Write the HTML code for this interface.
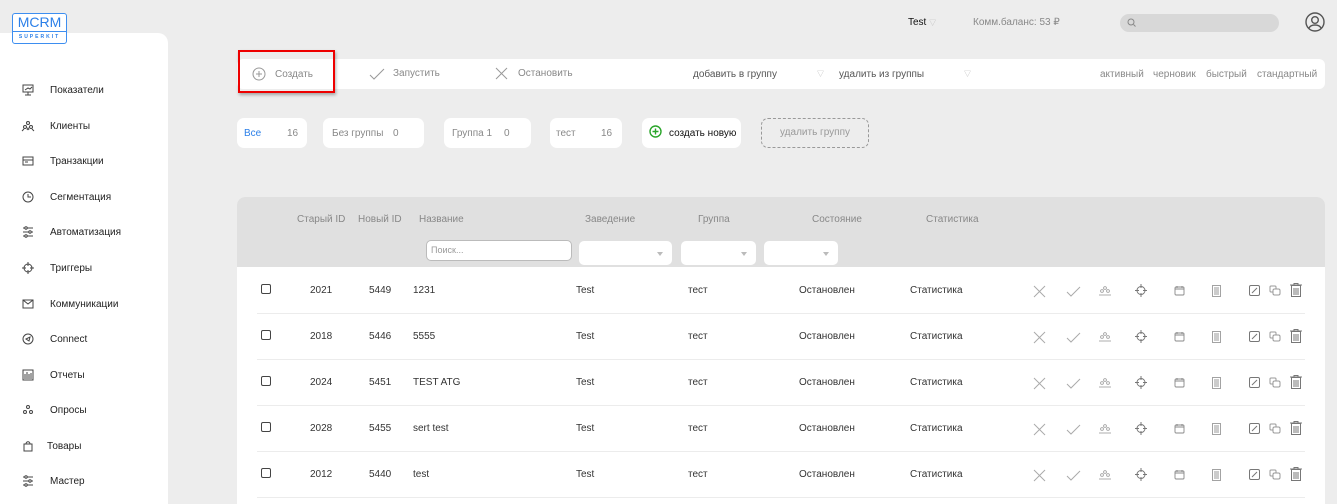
<!DOCTYPE html>
<html><head><meta charset="utf-8"><style>
*{box-sizing:border-box;margin:0;padding:0}
html,body{width:1337px;height:504px;overflow:hidden}
body{background:#ededed;font-family:"Liberation Sans","Noto Sans CJK SC",sans-serif;font-size:10px;color:#333;position:relative}
.a{position:absolute;white-space:nowrap}
.side{position:absolute;left:0;top:33px;width:168px;height:471px;background:#fff;border-top-right-radius:10px}
.nav{position:absolute;left:22px;font-size:10px;color:#222}
.nav svg{position:absolute;left:0;top:-1px}
.nav span{position:absolute;left:28px;top:0}
.logo{position:absolute;z-index:5;left:12px;top:13px;width:55px;height:31px;border:1.5px solid #3d8ef0;border-radius:3px;color:#2b7fe8;text-align:center;background:#fff;overflow:hidden}
.bar{position:absolute;left:237px;top:59px;width:1088px;height:30px;background:#fff;border-radius:6px}
.g{color:#888}
.chip{position:absolute;top:118px;height:30px;background:#fff;border-radius:7px}
.card{position:absolute;left:237px;top:197px;width:1088px;height:320px;background:#fff;border-radius:8px;overflow:hidden}
.head{position:absolute;left:0;top:0;width:1088px;height:70px;background:#e0e0e0}
.sel{position:absolute;top:44px;height:24px;background:#fff;border-radius:5px}
.sel:after{content:"";position:absolute;right:9px;top:11px;border:3px solid transparent;border-top:4px solid #bbb}
.ln{position:absolute;left:20px;width:1048px;height:1px;background:#ececec}
.cb{position:absolute;left:24px;width:10px;height:10px;border:1.3px solid #444;border-radius:2px}
svg{overflow:visible}
</style></head><body>
<div class="side">
<div class="nav" style="top:52px"><svg width="12" height="12" fill="none" stroke="#444"><rect x="1" y="1" width="10" height="7"/><path d="M6 8v3M3 11h6M3 6l3-2 2 1 2-2"/></svg><span>Показатели</span></div>
<div class="nav" style="top:88px"><svg width="12" height="12" fill="none" stroke="#444"><circle cx="6" cy="3" r="1.5"/><circle cx="3" cy="7" r="1.5"/><circle cx="9" cy="7" r="1.5"/><path d="M0 11l2-2M12 11l-2-2M5 10l1-2 1 2"/></svg><span>Клиенты</span></div>
<div class="nav" style="top:123px"><svg width="12" height="12" fill="none" stroke="#444"><rect x="1" y="2" width="10" height="8"/><path d="M1 5h10M3 7h3"/></svg><span>Транзакции</span></div>
<div class="nav" style="top:159px"><svg width="12" height="12" fill="none" stroke="#444"><circle cx="6" cy="6" r="5"/><path d="M6 3v3h3"/></svg><span>Сегментация</span></div>
<div class="nav" style="top:194px"><svg width="12" height="12" fill="none" stroke="#444"><path d="M1 2h10M1 6h10M1 10h10"/><circle cx="4" cy="2" r="1.2" fill="#fff"/><circle cx="8" cy="6" r="1.2" fill="#fff"/><circle cx="4" cy="10" r="1.2" fill="#fff"/></svg><span>Автоматизация</span></div>
<div class="nav" style="top:230px"><svg width="12" height="12" fill="none" stroke="#444"><circle cx="6" cy="6" r="4"/><path d="M6 0v4M6 8v4M0 6h4M8 6h4"/></svg><span>Триггеры</span></div>
<div class="nav" style="top:266px"><svg width="12" height="12" fill="none" stroke="#444"><rect x="1" y="2" width="10" height="8"/><path d="M1 2l5 4 5-4"/></svg><span>Коммуникации</span></div>
<div class="nav" style="top:301px"><svg width="12" height="12" fill="none" stroke="#444"><circle cx="6" cy="6" r="5"/><path d="M4 6l4-2-1 4z"/></svg><span>Connect</span></div>
<div class="nav" style="top:337px"><svg width="12" height="12" fill="none" stroke="#444"><rect x="1" y="1" width="10" height="10"/><path d="M3 8V5M5 8V3M7 8V5M9 8V4M2 9h8"/></svg><span>Отчеты</span></div>
<div class="nav" style="top:372px"><svg width="12" height="12" fill="none" stroke="#444"><circle cx="6" cy="3" r="1.5"/><circle cx="3" cy="8" r="1.5"/><circle cx="9" cy="8" r="1.5"/></svg><span>Опросы</span></div>
<div class="nav" style="top:408px"><svg width="12" height="12" fill="none" stroke="#444"><path d="M2 4h8v7H2zM4 4c0-3 4-3 4 0"/></svg><span style="left:25px">Товары</span></div>
<div class="nav" style="top:443px"><svg width="12" height="12" fill="none" stroke="#444"><path d="M1 2h10M1 6h10M1 10h10"/><circle cx="4" cy="2" r="1.2" fill="#fff"/><circle cx="8" cy="6" r="1.2" fill="#fff"/><circle cx="4" cy="10" r="1.2" fill="#fff"/></svg><span>Мастер</span></div>
</div>
<div class="logo"><div style="font-size:14px;line-height:17px">MCRM</div><div style="border-top:1px solid #3d8ef0;font-size:5px;letter-spacing:2px;line-height:10px;font-weight:bold">SUPERKIT</div></div>

<div class="a" style="left:908px;top:17px;color:#111">Test <span style="color:#bbb;font-size:7px">▽</span></div>
<div class="a g" style="left:973px;top:17px">Комм.баланс: 53 ₽</div>
<div class="a" style="left:1120px;top:14px;width:159px;height:18px;background:#d8d8d8;border-radius:9px"><svg width="10" height="10" style="position:absolute;left:7px;top:4px" fill="none" stroke="#888"><circle cx="4" cy="4" r="3"/><path d="M6.5 6.5l2 2"/></svg></div>
<svg class="a" style="left:1305px;top:12px" width="20" height="20" fill="none" stroke="#555" stroke-width="1.4"><circle cx="10" cy="10" r="9"/><circle cx="10" cy="8" r="3.3"/><path d="M4 16c2-4 10-4 12 0"/></svg>

<div class="bar">
<svg class="a" style="left:15px;top:8px" width="14" height="14" fill="none" stroke="#999"><circle cx="7" cy="7" r="6"/><path d="M7 4v6M4 7h6"/></svg>
<div class="a g" style="left:38px;top:10px">Создать</div>
<svg class="a" style="left:132px;top:9px" width="16" height="12" fill="none" stroke="#999"><path d="M1 7l4 4 10-10"/></svg>
<div class="a g" style="left:156px;top:9px">Запустить</div>
<svg class="a" style="left:258px;top:8px" width="13" height="13" fill="none" stroke="#999"><path d="M1 1l11 11M12 1L1 12"/></svg>
<div class="a g" style="left:281px;top:9px">Остановить</div>
<div class="a" style="left:456px;top:10px;color:#555">добавить в группу</div>
<div class="a" style="left:580px;top:10px;color:#bbb;font-size:7px">▽</div>
<div class="a" style="left:602px;top:10px;color:#555">удалить из группы</div>
<div class="a" style="left:727px;top:10px;color:#bbb;font-size:7px">▽</div>
<div class="a g" style="left:863px;top:10px">активный</div>
<div class="a g" style="left:916px;top:10px">черновик</div>
<div class="a g" style="left:969px;top:10px">быстрый</div>
<div class="a g" style="left:1020px;top:10px">стандартный</div>
</div>
<div class="a" style="left:238px;top:50px;width:97px;height:43px;border:2px solid #e00;box-shadow:1px 2px 3px rgba(0,0,0,.3)"></div>

<div class="chip" style="left:237px;width:70px"><span class="a" style="left:7px;top:10px;color:#2b7fe8">Все</span><span class="a g" style="left:50px;top:10px">16</span></div>
<div class="chip" style="left:323px;width:101px"><span class="a g" style="left:9px;top:10px">Без группы</span><span class="a g" style="left:70px;top:10px">0</span></div>
<div class="chip" style="left:444px;width:87px"><span class="a g" style="left:8px;top:10px">Группа 1</span><span class="a g" style="left:60px;top:10px">0</span></div>
<div class="chip" style="left:550px;width:72px"><span class="a g" style="left:6px;top:10px">тест</span><span class="a g" style="left:51px;top:10px">16</span></div>
<div class="chip" style="left:642px;width:99px"><svg class="a" style="left:7px;top:7px" width="13" height="13" fill="none" stroke="#2aa52a" stroke-width="1.4"><circle cx="6.5" cy="6.5" r="5.5"/><path d="M6.5 3.5v6M3.5 6.5h6"/></svg><span class="a" style="left:27px;top:10px;color:#111">создать новую</span></div>
<div class="a" style="left:761px;top:118px;width:108px;height:30px;border:1px dashed #999;border-radius:7px;color:#999;text-align:center;line-height:28px">удалить группу</div>

<div class="card">
<div class="head">
<div class="a g" style="left:60px;top:17px">Старый ID</div>
<div class="a g" style="left:121px;top:17px">Новый ID</div>
<div class="a g" style="left:182px;top:17px">Название</div>
<div class="a g" style="left:348px;top:17px">Заведение</div>
<div class="a g" style="left:461px;top:17px">Группа</div>
<div class="a g" style="left:575px;top:17px">Состояние</div>
<div class="a g" style="left:689px;top:17px">Статистика</div>
<div class="a" style="left:189px;top:43px;width:146px;height:21px;background:#fff;border:1px solid #bbb;border-radius:5px;color:#999;padding:4px 4px;font-size:9px">Поиск...</div>
<div class="sel" style="left:342px;width:93px"></div>
<div class="sel" style="left:444px;width:75px"></div>
<div class="sel" style="left:527px;width:74px"></div>
</div>
</div>
<div id="rows"></div>
<script>
var d=[["2021","5449","1231"],["2018","5446","5555"],["2024","5451","TEST ATG"],["2028","5455","sert test"],["2012","5440","test"]];
var h="";d.forEach(function(r,i){var y=284+i*46;
h+='<div class="cb" style="left:261px;top:'+y+'px"></div>'+
'<div class="a" style="left:310px;top:'+(y+1)+'px">'+r[0]+'</div><div class="a" style="left:369px;top:'+(y+1)+'px">'+r[1]+'</div><div class="a" style="left:413px;top:'+(y+1)+'px">'+r[2]+'</div>'+
'<div class="a" style="left:576px;top:'+(y+1)+'px">Test</div><div class="a" style="left:688px;top:'+(y+1)+'px">тест</div><div class="a" style="left:799px;top:'+(y+1)+'px">Остановлен</div><div class="a" style="left:910px;top:'+(y+1)+'px">Статистика</div>'+
'<svg class="a" style="left:1034px;top:'+(y+2)+'px" width="11" height="11" fill="none" stroke="#aaa"><path d="M0 0l11 11M11 0L0 11"/></svg>'+
'<svg class="a" style="left:1067px;top:'+(y+3)+'px" width="13" height="9" fill="none" stroke="#aaa"><path d="M0 5l4 4 9-9"/></svg>'+
'<svg class="a" style="left:1099px;top:'+(y+2)+'px" width="12" height="10" fill="none" stroke="#999" stroke-width=".8"><circle cx="6" cy="2" r="1.4"/><circle cx="3" cy="5" r="1.4"/><circle cx="9" cy="5" r="1.4"/><path d="M0 9h12"/></svg>'+
'<svg class="a" style="left:1135px;top:'+(y)+'px" width="12" height="13" fill="none" stroke="#777"><circle cx="6" cy="6.5" r="4"/><path d="M6 0v4M6 9v4M0 6.5h4M8 6.5h4"/></svg>'+
'<svg class="a" style="left:1174px;top:'+(y+1)+'px" width="11" height="11" fill="none" stroke="#888" stroke-width=".9"><rect x="1" y="2" width="9" height="8" rx="1"/><path d="M1 4h9M3 1v2M8 1v2"/></svg>'+
'<svg class="a" style="left:1212px;top:'+(y+1)+'px" width="9" height="12" fill="none" stroke="#999" stroke-width=".9"><rect x="0.5" y="0.5" width="8" height="11"/><path d="M2 3h5M2 5h5M2 7h5M2 9h5"/></svg>'+
'<svg class="a" style="left:1249px;top:'+(y+1)+'px" width="11" height="11" fill="none" stroke="#777"><rect x="0.5" y="0.5" width="10" height="10" rx="1.5"/><path d="M3 8l5-5"/></svg>'+
'<svg class="a" style="left:1269px;top:'+(y+1)+'px" width="12" height="11" fill="none" stroke="#999"><rect x="4" y="4" width="7" height="6" rx="1.5"/><path d="M4 7H2a1 1 0 0 1-1-1V2a1 1 0 0 1 1-1h4a1 1 0 0 1 1 1v2"/></svg>'+
'<svg class="a" style="left:1290px;top:'+(y-1)+'px" width="12" height="14" fill="none" stroke="#777"><path d="M0 2h12M4 2V0.5h4V2M1.5 2.5h9V13.5h-9z M4 5v7M6 5v7M8 5v7"/></svg>'+
'<div class="ln" style="left:257px;top:'+(y+29)+'px"></div>';});
document.getElementById("rows").innerHTML=h;
</script>
</body></html>
